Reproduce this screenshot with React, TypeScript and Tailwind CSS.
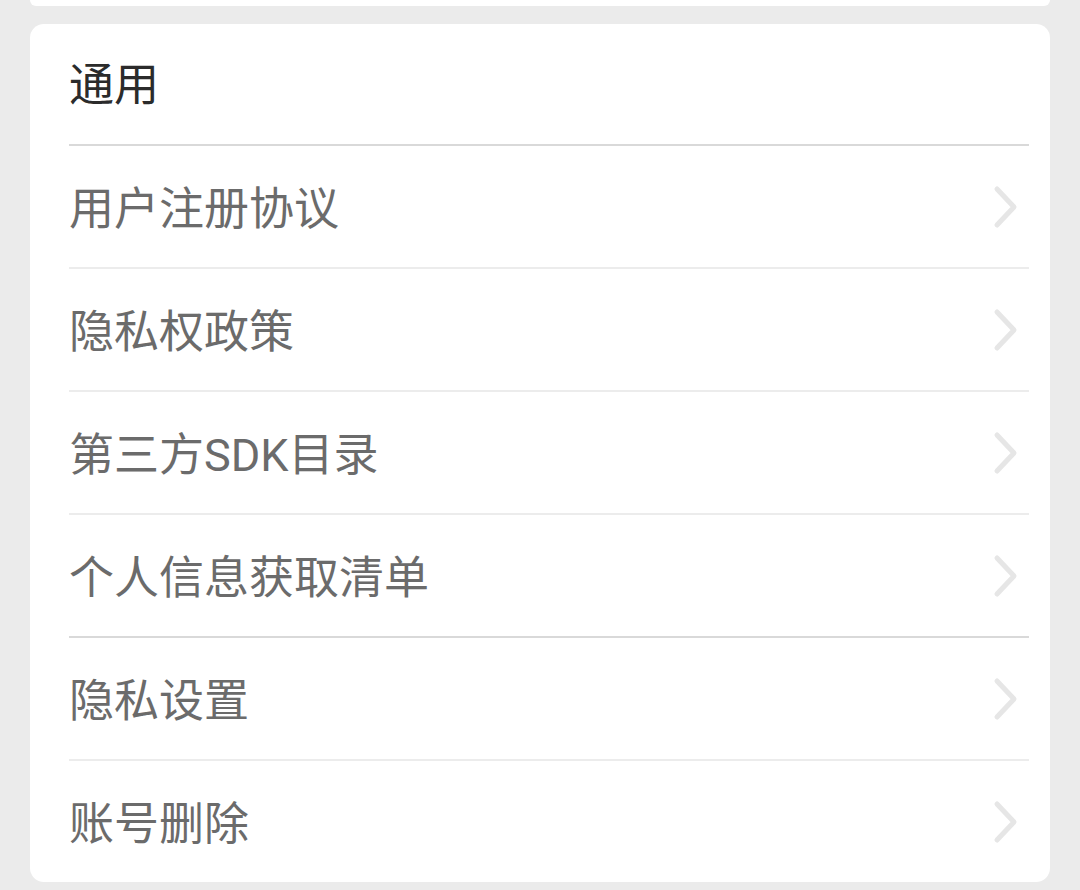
const ITEMS = [
  { label: '用户注册协议', line: 'border-[#ececec]' },
  { label: '隐私权政策', line: 'border-[#ececec]' },
  { label: '第三方SDK目录', line: 'border-[#ececec]' },
  { label: '个人信息获取清单', line: 'border-[#d9d9d9]' },
  { label: '隐私设置', line: 'border-[#ececec]' },
  { label: '账号删除', line: '' },
]

function Chevron() {
  return (
    <svg width="26" height="44" viewBox="0 0 26 44" fill="none" className="shrink-0">
      <polyline
        points="4,4 21,22 4,40"
        stroke="#e6e6e6"
        strokeWidth="5"
        strokeLinecap="round"
        strokeLinejoin="round"
      />
    </svg>
  )
}

export default function App() {
  return (
    <div
      className="min-h-[890px] bg-[#ebebeb] px-[30px]"
      style={{ fontFamily: 'Roboto, "Noto Sans CJK SC", sans-serif' }}
    >
      {/* previous card, only its bottom edge is visible */}
      <div className="h-[6px] bg-white rounded-b-[14px]" />

      <div className="mt-[18px] bg-white rounded-[14px] pl-[39px] pr-[21px]">
        <div className="h-[122px] flex items-center border-b-2 border-[#d9d9d9]">
          <span className="text-[45px] leading-none text-[#2b2b2b] pt-[2px]">通用</span>
        </div>

        {ITEMS.map((item, i) => (
          <div
            key={item.label}
            className={
              i < ITEMS.length - 1
                ? `h-[123px] flex items-center justify-between border-b-2 ${item.line}`
                : 'h-[121px] flex items-center justify-between'
            }
          >
            <span className="text-[45px] leading-none text-[#6b6b6b] pt-[5px]">{item.label}</span>
            <div className="mr-[10px]">
              <Chevron />
            </div>
          </div>
        ))}
      </div>
    </div>
  )
}
